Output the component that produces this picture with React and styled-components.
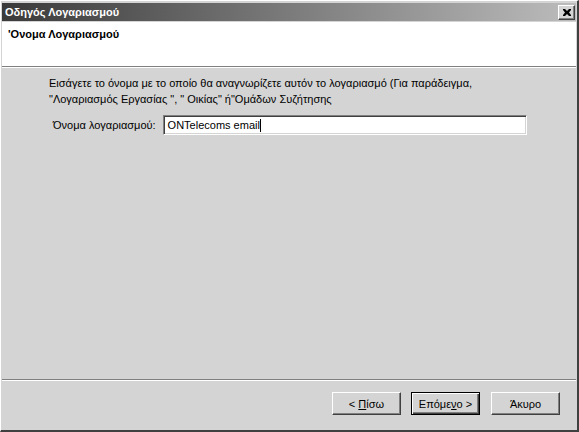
import React from "react";
import styled, { createGlobalStyle } from "styled-components";

const Global = createGlobalStyle`
  html, body { margin: 0; padding: 0; background: #d4d4d4; }
  body { font-family: "Liberation Sans", Arial, sans-serif; font-size: 11px; color: #000; }
`;

const Frame = styled.div`
  width: 579px;
  height: 432px;
  box-sizing: border-box;
  background: #d4d4d4;
  border-style: solid;
  border-width: 1px 2px 2px 1px;
  border-color: #fff #404040 #404040 #fff;
  display: flex;
  flex-direction: column;
  padding: 2px 1px 0 1px;
`;

const TitleBar = styled.div`
  height: 18px;
  display: flex;
  align-items: center;
  justify-content: space-between;
  padding: 0 1px 0 3px;
  background: linear-gradient(to right, #3a3a3a, #bcbcbc);
  color: #fff;
  font-weight: bold;
  font-size: 11px;
`;

const CloseButton = styled.div`
  width: 17px;
  height: 15px;
  box-sizing: border-box;
  background: #d4d4d4;
  border-style: solid;
  border-width: 1px;
  border-color: #fff #404040 #404040 #fff;
  box-shadow: inset -1px -1px 0 #808080;
  display: flex;
  align-items: center;
  justify-content: center;
`;

const Header = styled.div`
  height: 45px;
  background: #fff;
  border-bottom: 1px solid #808080;
  box-shadow: 0 1px 0 #fff;
  padding: 6px 0 0 6px;
  box-sizing: border-box;
  font-weight: bold;
  margin-top: 1px;
`;

const Body = styled.div`
  flex: 1;
  padding: 8px 0 0 47px;
  display: flex;
  flex-direction: column;
`;

const Paragraph = styled.p`
  margin: 0;
  line-height: 16px;
`;

const FieldRow = styled.div`
  display: flex;
  align-items: center;
  margin-top: 8px;
  gap: 7px;
`;

const Label = styled.span`
  padding-left: 4px;
`;

const Input = styled.div`
  width: 364px;
  height: 20px;
  box-sizing: border-box;
  background: #fff;
  border-style: solid;
  border-width: 1px;
  border-color: #808080 #fff #fff #808080;
  box-shadow: inset 1px 1px 0 #404040, inset -1px -1px 0 #d4d4d4;
  display: flex;
  align-items: center;
  padding-left: 4px;
`;

const Caret = styled.span`
  display: inline-block;
  width: 1px;
  height: 13px;
  background: #000;
`;

const Footer = styled.div`
  height: 50px;
  border-top: 1px solid #808080;
  box-shadow: inset 0 1px 0 #fff;
  display: flex;
  justify-content: flex-end;
  align-items: flex-start;
  padding: 12px 16px 0 0;
  box-sizing: border-box;
  margin-bottom: 1px;
`;

const Button = styled.div`
  width: 69px;
  height: 23px;
  box-sizing: border-box;
  margin-left: ${(p) => (p.$gap ? p.$gap : 0)}px;
  background: #d4d4d4;
  border-style: solid;
  border-width: 1px;
  border-color: ${(p) => (p.$default ? "#000" : "#fff #404040 #404040 #fff")};
  box-shadow: ${(p) =>
    p.$default
      ? "inset 1px 1px 0 #fff, inset -1px -1px 0 #404040, inset -2px -2px 0 #808080"
      : "inset -1px -1px 0 #808080"};
  display: flex;
  align-items: center;
  justify-content: center;
`;

const U = styled.span`
  text-decoration: underline;
`;

export default function App() {
  return (
    <>
      <Global />
      <Frame>
        <TitleBar>
          <span>Οδηγός Λογαριασμού</span>
          <CloseButton>
            <svg width="8" height="7" viewBox="0 0 8 7">
              <path d="M0 0h2l2 2 2-2h2v1L6 3.5 8 6v1H6L4 5 2 7H0V6l2-2.5L0 1z" fill="#000" />
            </svg>
          </CloseButton>
        </TitleBar>
        <Header>'Ονομα Λογαριασμού</Header>
        <Body>
          <Paragraph>
            Εισάγετε το όνομα με το οποίο θα αναγνωρίζετε αυτόν το λογαριασμό (Για παράδειγμα,
            <br />
            "Λογαριασμός Εργασίας ", " Οικίας" ή"Ομάδων Συζήτησης
          </Paragraph>
          <FieldRow>
            <Label>Όνομα λογαριασμού:</Label>
            <Input>
              ONTelecoms email
              <Caret />
            </Input>
          </FieldRow>
        </Body>
        <Footer>
          <Button>
            &lt;&nbsp;<U>Π</U>ίσω
          </Button>
          <Button $default $gap={10}>
            Επόμε<U>ν</U>ο &gt;
          </Button>
          <Button $gap={11}>Άκυρο</Button>
        </Footer>
      </Frame>
    </>
  );
}
